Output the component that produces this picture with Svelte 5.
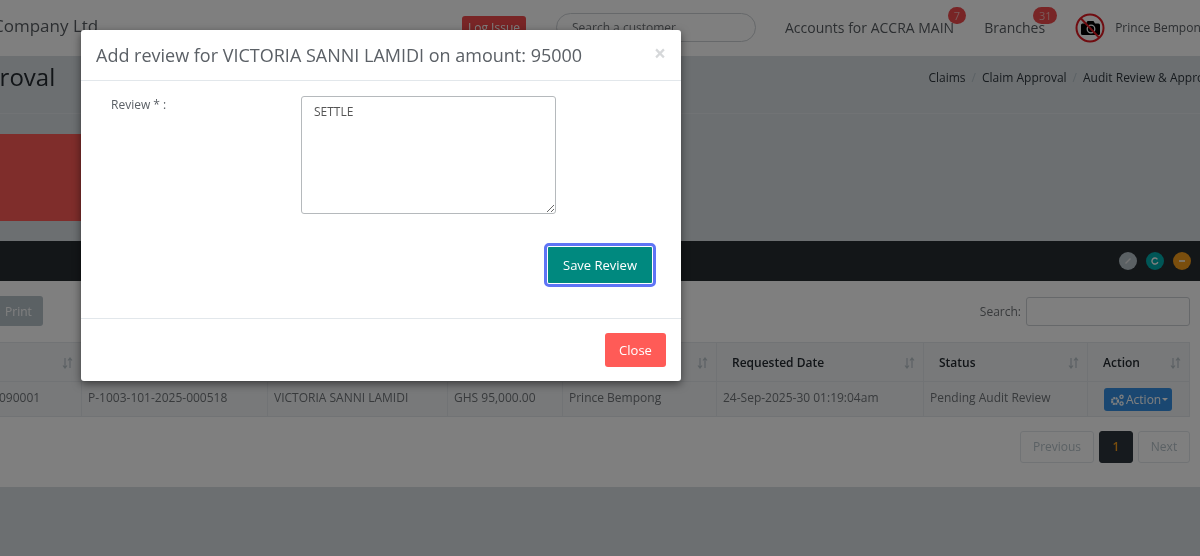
<script>
  const heads = [
    { label: 'Claim No', w: 151 },
    { label: 'Policy No', w: 186 },
    { label: 'Client Name', w: 180 },
    { label: 'Amount', w: 115 },
    { label: 'Requested By', w: 154 },
    { label: 'Requested Date', w: 207 },
    { label: 'Status', w: 164 },
    { label: 'Action', w: 102 }
  ];
  const row = ['CL-2025-090001', 'P-1003-101-2025-000518', 'VICTORIA SANNI LAMIDI', 'GHS 95,000.00', 'Prince Bempong', '24-Sep-2025-30 01:19:04am', 'Pending Audit Review'];
</script>

<div class="page">
  <header class="topbar">
    <div class="brand">Company Ltd</div>
    <button class="log">Log Issue</button>
    <div class="search">Search a customer</div>
    <div class="nav accounts">Accounts for ACCRA MAIN<span class="badge one">7</span></div>
    <div class="nav branches">Branches<span class="badge two">31</span></div>
    <svg class="avatar" viewBox="0 0 30 30" aria-hidden="true">
      <path d="M7 10.500h4l1.500-2.500h6l1.500 2.500h3.500a1.500 1.500 0 0 1 1.500 1.500v8.500a1.500 1.500 0 0 1-1.500 1.500h-16a1.500 1.500 0 0 1-1.500-1.500v-8.500a1.500 1.500 0 0 1 1.500-1.500z" fill="#000"/>
      <circle cx="16" cy="16" r="3.800" fill="none" stroke="#fff" stroke-width="1.300"/>
      <circle cx="15" cy="15" r="13.500" fill="none" stroke="#e01a22" stroke-width="2"/>
      <path d="M6 5.500 24 24.500" stroke="#e01a22" stroke-width="2"/>
    </svg>
    <div class="user">Prince Bempong</div>
  </header>

  <section class="titlebar">
    <h1>Claim Approval</h1>
    <nav class="crumbs">
      <span>Claims</span><i>/</i><span>Claim Approval</span><i>/</i><span>Audit Review &amp; Approval</span>
    </nav>
  </section>
  <div class="rule"></div>

  <div class="content">
    <div class="redbox"></div>

    <div class="panel">
      <div class="panel-head">
        <span class="dot grey"><svg viewBox="0 0 10 10"><path d="M2.500 7.500 7.500 2.500" stroke="#e8e8e8" stroke-width="1.500"/></svg></span>
        <span class="dot teal"><svg viewBox="0 0 10 10"><path d="M7.400 3.300A3 3 0 1 0 7.800 6" fill="none" stroke="#fff" stroke-width="1.400"/></svg></span>
        <span class="dot orange"><svg viewBox="0 0 10 10"><path d="M2 5h6" stroke="#fff" stroke-width="1.500"/></svg></span>
      </div>
      <div class="panel-body">
        <div class="tools">
          <button class="print">Print</button>
          <label class="filter">Search: <span class="finput"></span></label>
        </div>
        <table>
          <colgroup>
            {#each heads as h}<col style="width: {h.w}px" />{/each}
          </colgroup>
          <thead>
            <tr>
              {#each heads as h}
                <th>
                  {h.label}
                  <svg class="sort" viewBox="0 0 11 12" aria-hidden="true">
                    <path d="M3 1v10M1 8.500 3 11l2-2.500M8 11V1M6 3.500 8 1l2 2.500" fill="none" stroke="currentColor" stroke-width="1.200"/>
                  </svg>
                </th>
              {/each}
            </tr>
          </thead>
          <tbody>
            <tr>
              {#each row as c}<td>{c}</td>{/each}
              <td class="act">
                <button class="action">
                  <svg viewBox="0 0 14 12" aria-hidden="true">
                    <circle cx="5" cy="7" r="3" fill="none" stroke="currentColor" stroke-width="2.200" stroke-dasharray="1.800 .6"/>
                    <circle cx="11.500" cy="2.800" r="1.600" fill="none" stroke="currentColor" stroke-width="1.300"/>
                    <circle cx="11.500" cy="9.500" r="1.600" fill="none" stroke="currentColor" stroke-width="1.300"/>
                  </svg>
                  <span>Action</span><b class="caret"></b>
                </button>
              </td>
            </tr>
          </tbody>
        </table>
        <div class="pager">
          <span class="pg prev">Previous</span>
          <span class="pg cur">1</span>
          <span class="pg next">Next</span>
        </div>
      </div>
    </div>
  </div>

  <div class="backdrop"></div>

  <div class="modal">
    <div class="m-head">
      <h4>Add review for VICTORIA SANNI LAMIDI on amount: 95000</h4>
      <span class="x">×</span>
    </div>
    <div class="m-body">
      <div class="field">
        <label for="review">Review * :</label>
        <textarea id="review" readonly>SETTLE</textarea>
      </div>
      <div class="save-row">
        <button class="save">Save Review</button>
      </div>
    </div>
    <div class="m-foot">
      <button class="close">Close</button>
    </div>
  </div>
</div>

<style>
  :global(body) { margin: 0; }
  .page {
    position: relative;
    width: 1200px;
    height: 556px;
    overflow: hidden;
    background: #d9dfe3;
    font-family: "Open Sans", "Liberation Sans", sans-serif;
    font-size: 12px;
    color: #707478;
    filter: blur(.4px);
  }
  button { font-family: inherit; border: 0; }

  .topbar {
    display: flex;
    align-items: center;
    height: 56px;
    box-sizing: border-box;
    background: #fff;
    white-space: nowrap;
    padding-bottom: 1px;
  }
  .brand { width: 469px; margin-left: -7px; font-size: 17px; color: #585d62; margin-top: -5px; flex: none; }
  .log {
    width: 64px; height: 22px; margin-top: -1px; padding: 0; border-radius: 3px;
    background: #f04b4c; color: #fff; font-size: 12px; flex: none;
  }
  .search {
    width: 200px; height: 29px; margin-left: 30px; box-sizing: border-box; padding: 5px 15px;
    border: 1px solid #ccd0d4; border-radius: 15px; font-size: 12px; color: #707478; flex: none;
  }
  .nav { position: relative; font-size: 14px; color: #585d62; }
  .accounts { margin-left: 29px; }
  .branches { margin-left: 30px; }
  .badge {
    position: absolute; top: -11px; height: 17px; border-radius: 9px; background: #f04b4c;
    color: #f4b8b8; font-size: 11px; line-height: 17px; text-align: center;
  }
  .one { left: 163px; width: 18px; }
  .two { left: 49px; width: 24px; }
  .avatar { width: 30px; height: 30px; margin-left: 30px; flex: none; }
  .user { margin-left: 10px; font-size: 12px; color: #585d62; }

  .titlebar {
    display: flex; justify-content: space-between; align-items: center; height: 44px;
    margin-left: -114px; margin-right: -20px; white-space: nowrap;
  }
  h1 { margin: 0 0 3px; font-size: 24px; font-weight: 400; color: #242a30; }
  .crumbs { display: flex; font-size: 12px; color: #2d353c; margin-top: -2px; }
  .crumbs i { font-style: normal; color: #b6c2c9; padding: 0 6px; }
  .rule { height: 1px; margin-top: 13px; background: #e2e7eb; }

  .content { padding-top: 20px; }
  .redbox { width: 200px; height: 87px; margin-left: -20px; background: #ff5b57; }

  .panel { margin-top: 20px; background: #fff; }
  .panel-head {
    display: flex; justify-content: flex-end; align-items: center; gap: 9px; height: 40px;
    box-sizing: border-box; padding-right: 9px; background: #262c30;
  }
  .dot { width: 18px; height: 18px; border-radius: 50%; display: flex; align-items: center; justify-content: center; }
  .dot svg { width: 10px; height: 10px; }
  .grey { background: #b6c2c9; }
  .teal { background: #00acac; }
  .orange { background: #f59c1a; }

  .panel-body { height: 206px; box-sizing: border-box; padding: 16px 10px 0 0; }
  .tools { display: flex; justify-content: space-between; height: 45px; }
  .print {
    width: 49px; height: 30px; margin: -1px 0 0 -6px; padding: 0; border-radius: 3px;
    background: #b6c2c9; color: #fff; font-size: 12px;
  }
  .filter { display: flex; align-items: center; gap: 5px; height: 29px; color: #707478; }
  .finput { width: 162px; height: 27px; border: 1px solid #ccd0d4; border-radius: 3px; background: #fff; }

  table {
    table-layout: fixed; width: 1259px; margin-left: -70px; border-collapse: collapse;
    border: 1px solid #e2e7ea; background: #f0f3f5;
  }
  th, td {
    position: relative; box-sizing: border-box; border: 1px solid #e2e7ea; text-align: left;
    white-space: nowrap; overflow: hidden;
  }
  th { height: 39px; padding: 0 15px; color: #242a30; font-size: 12px; font-weight: 600; }
  td { height: 35px; padding: 0 6px 4px; background: #f0f3f5; }
  td:first-child { padding-left: 19px; }
  .sort { position: absolute; right: 8px; top: 14px; width: 11px; height: 12px; color: #b8c2c8; }
  .act { padding: 0; }
  .action {
    display: flex; align-items: center; width: 68px; height: 23px; margin: 1px 0 0 16px; padding: 0 0 0 6px;
    box-sizing: border-box; border-radius: 3px; background: #348fe2; color: #fff; font-size: 12px;
  }
  .action svg { width: 14px; height: 12px; margin-right: 2px; flex: none; }
  .caret { width: 0; height: 0; margin-left: 1px; border: 3px solid transparent; border-top-color: #fff; border-bottom: 0; }

  .pager { display: flex; justify-content: flex-end; gap: 5px; margin-top: 14px; }
  .pg {
    box-sizing: border-box; height: 32px; line-height: 30px; text-align: center;
    border: 1px solid #e2e7eb; border-radius: 3px; color: #b6c2c9; background: #fff;
  }
  .prev { width: 74px; }
  .next { width: 52px; }
  .cur { width: 34px; background: #2d353c; border-color: #2d353c; color: #f59c1a; font-weight: 600; }

  .backdrop { position: absolute; inset: 0; background: rgba(0, 0, 0, .5); }

  .modal {
    position: absolute; left: 81px; top: 30px; width: 600px; height: 351px;
    display: flex; flex-direction: column; background: #fff; border-radius: 3px;
    box-shadow: 0 3px 9px rgba(0, 0, 0, .5);
  }
  .m-head {
    display: flex; align-items: center; justify-content: space-between; height: 51px;
    box-sizing: border-box; padding: 0 15px; border-bottom: 1px solid #e2e7eb;
  }
  h4 { margin: 0; font-size: 18px; font-weight: 400; color: #5b6066; white-space: nowrap; }
  .x { font-size: 21px; font-weight: 700; color: #d6d8da; margin-top: -4px; }
  .m-body { flex: 1; padding: 15px 29px 0 30px; }
  .field { display: flex; align-items: flex-start; }
  .field label { width: 190px; font-size: 12px; color: #5b6066; }
  textarea {
    display: block; width: 255px; height: 118px; box-sizing: border-box; margin: 0; padding: 6px 12px;
    border: 1px solid #b5b9bc; border-radius: 3px; font-family: inherit; font-size: 12px; color: #555;
    outline: none; background: #fff;
  }
  .save-row { display: flex; justify-content: flex-end; margin-top: 33px; }
  .save {
    width: 104px; height: 36px; padding: 0; border-radius: 1px; background: #00897f; color: #fff; font-size: 13px;
    outline: 3px solid #5f74f5; outline-offset: 1px;
  }
  .m-foot {
    display: flex; justify-content: flex-end; height: 63px; box-sizing: border-box;
    padding: 14px 15px 0 0; border-top: 1px solid #e2e7eb;
  }
  .close {
    width: 61px; height: 34px; padding: 0; border-radius: 3px; background: #ff5b57; color: #fff; font-size: 13px;
  }
</style>
